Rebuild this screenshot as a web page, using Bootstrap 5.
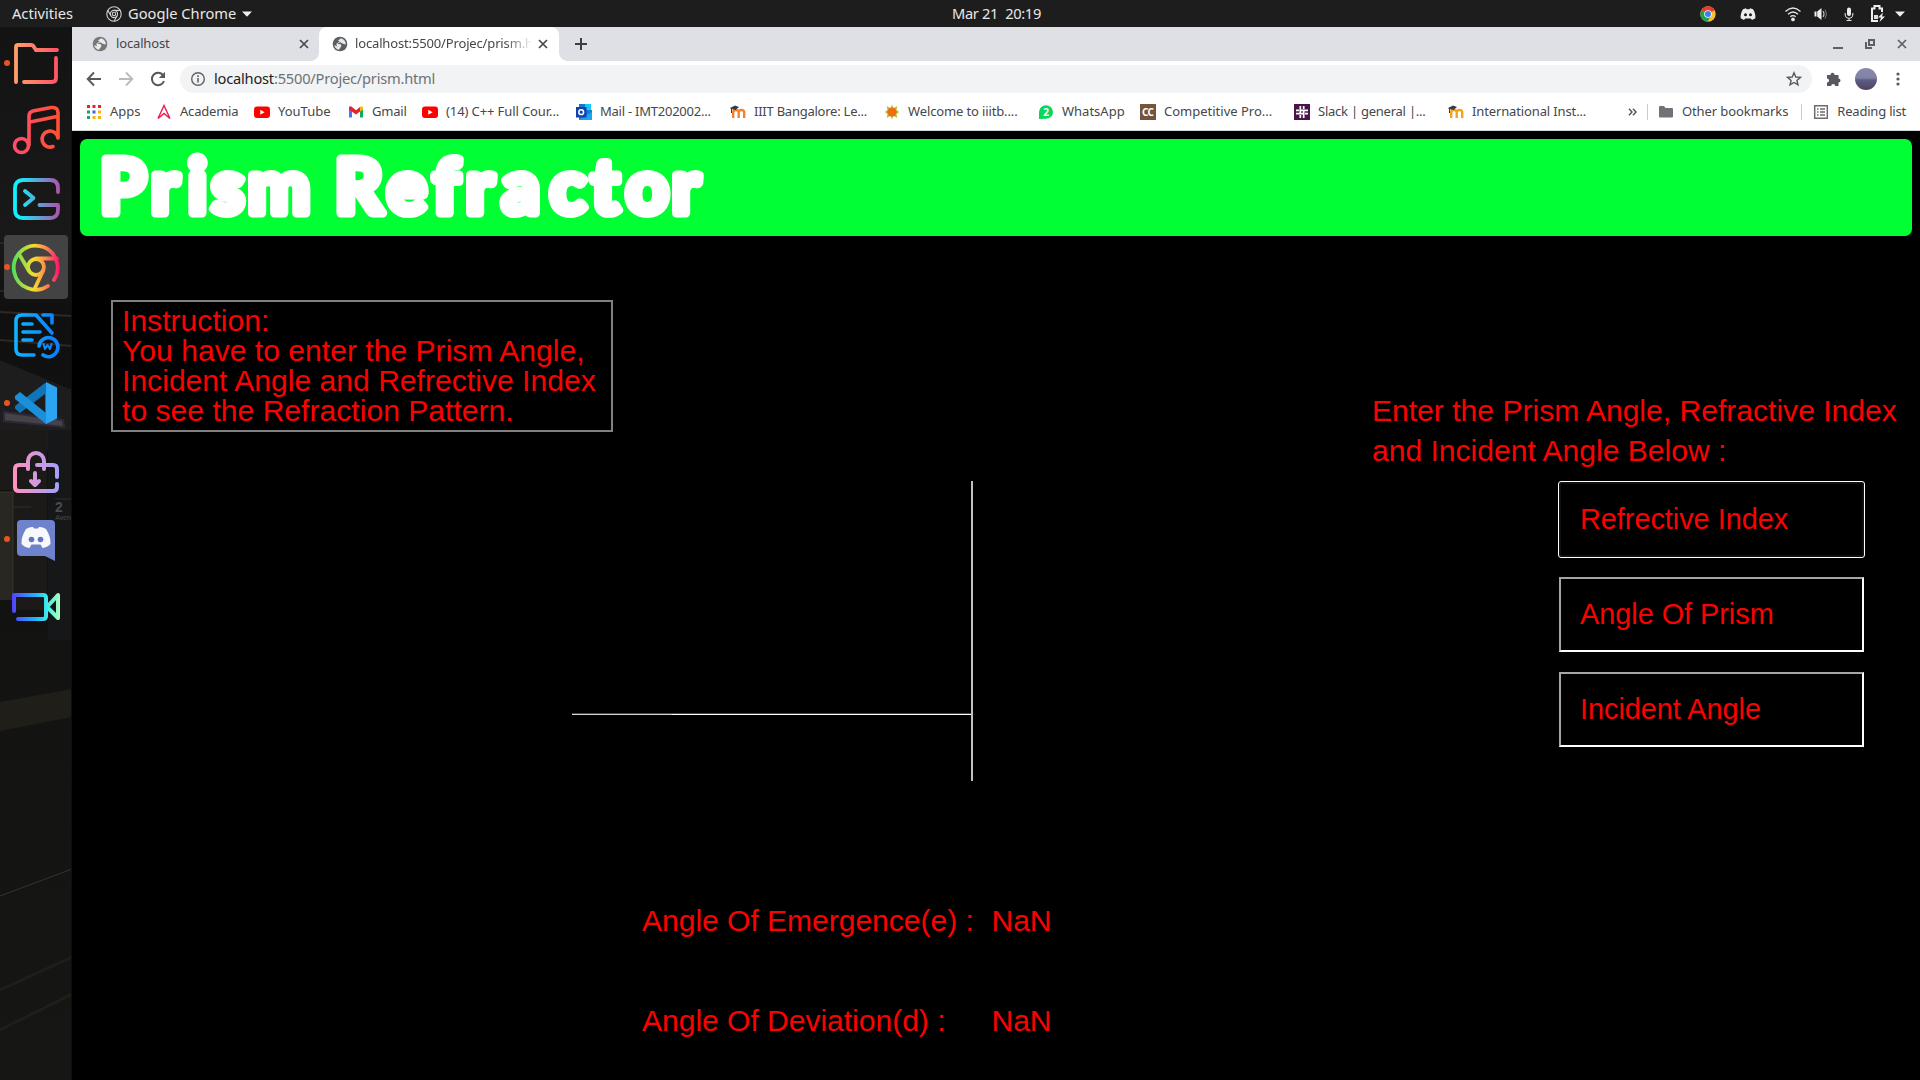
<!DOCTYPE html>
<html lang="en">
<head>
<meta charset="utf-8">
<title>Prism Refractor</title>
<link href="https://cdn.jsdelivr.net/npm/bootstrap@5.3.0/dist/css/bootstrap.min.css" rel="stylesheet">
<style>
body{width:1920px;height:1080px;overflow:hidden;background:#000;font-family:"Noto Sans",sans-serif;line-height:1.2}
svg{display:block;flex:none}
.sysbar{height:27px;background:#1d1d1d;color:#e8e8e6;font-size:14.67px;padding:0 15px 0 12px}
.sysbar .clock{left:952px;top:5px;white-space:pre;letter-spacing:-.33px}
.launcher{width:72px;height:1053px;background:#141414;padding:4px 4px 0}
.launcher .wall{left:0;top:0}
.slot{width:64px;height:64px;border-radius:4px}
.slot.current{background:#434343}
.slot.running::before{content:"";position:absolute;left:0;top:29px;width:6px;height:6px;border-radius:50%;background:#e95420}
.tabstrip{height:34px;background:#dee0e5;color:#45474a;font-size:13px;letter-spacing:-.15px}
.tab-idle{width:247px;padding:0 10px 0 20px}
.tab-open{width:240px;background:#fff;border-radius:8px 8px 0 0;padding:0 11px 0 13px}
.tab-open::before,.tab-open::after{content:"";position:absolute;bottom:0;width:8px;height:8px}
.tab-open::before{left:-8px;background:radial-gradient(circle at 0 0,transparent 7.5px,#fff 8px)}
.tab-open::after{right:-8px;background:radial-gradient(circle at 100% 0,transparent 7.5px,#fff 8px)}
.tab-open .ttl{width:176px;-webkit-mask-image:linear-gradient(90deg,#000 150px,transparent 178px)}
.toolbar{height:36px;background:#fff;padding:0 14px 0 14px}
.omni{width:1632px;height:28px;border-radius:14px;background:#f1f3f4;font-size:14.67px;color:#6e7175;padding:0 10px;letter-spacing:-.22px}
.omni b{font-weight:400;color:#202124}
.bmarks{height:34px;background:#fff;border-bottom:1px solid #d5d7db;font-size:13px;color:#45474a;padding:0 0 3px 14px}
.bmarks .it{gap:8px;margin-right:16px}
.bmarks .long{width:114px;letter-spacing:-.24px}
.bmarks .mid{width:58px;letter-spacing:-.2px}
.bmarks .sep{width:1px;height:16px;background:#c9cbce}
.page{font-family:"Liberation Sans",sans-serif;font-size:30px;color:#f00;height:949px;background:#000;padding:8px 8px 0}
.banner{height:97px;background:#00ff33;border-radius:7px}
.banner svg{overflow:visible}
.banner text{font-family:Lato,sans-serif;font-weight:700;font-size:74px;fill:#fff;stroke:#fff;stroke-width:9px;stroke-linejoin:round}
.lcol{width:1292px}
.howto{width:502px;height:132px;margin:64px 0 0 31px;border:2px solid #808080;padding:4px 0 0 9px;line-height:30px;letter-spacing:.05px}
.rays{margin:49px 0 0 492px}
.results{margin:125px 0 0 562px}
.results .line{height:100px;line-height:30px}
.results .lbl{width:349.5px}
.rcol{padding-top:155px;line-height:40px;letter-spacing:.03px}
.rcol label{height:91px}
.field{width:305px;height:75px;margin:0 0 20px 187px;border:2px solid;border-color:#a5a5a5 #fff #fff #a5a5a5;background:#000;color:#f00;border-radius:0;padding:0 19px;font:28.8px "Liberation Sans",sans-serif}
.field::placeholder{color:#f00;opacity:1}
.field.active{border-color:#101010;outline:1px solid #fff;border-radius:2px}
</style>
</head>
<body class="m-0">
<header class="sysbar d-flex align-items-center position-relative">
  <span>Activities</span>
  <svg style="margin-left:33px" width="16" height="16" viewBox="0 0 16 16" fill="none" stroke="#cfcfcf" stroke-width="1.1"><circle cx="8" cy="8" r="7.2"/><circle cx="8" cy="8" r="3.6"/><circle cx="8" cy="8" r="1.7"/><path d="M8 4.4h6.4M4.9 9.8 1.800 4.300M11.100 9.800 8 15.200"/></svg>
  <span style="margin-left:6px">Google Chrome</span>
  <svg style="margin-left:6px" width="10" height="6" viewBox="0 0 10 6"><path d="M0 .5h10L5 5.700z" fill="#eee"/></svg>
  <span class="clock position-absolute">Mar 21  20:19</span>
  <div class="ms-auto d-flex align-items-center">
    <svg width="16" height="16" viewBox="0 0 16 16"><circle cx="8" cy="8" r="7.7" fill="#fbc02d"/><path d="M8 8 1.300 4.200A7.700 7.700 0 0 1 14.700 4.200z" fill="#e33b2e"/><path d="M8 8 1.300 4.200A7.700 7.700 0 0 0 7.600 15.700L11 9.600z" fill="#1fa055"/><circle cx="8" cy="8" r="3.800" fill="#fff"/><circle cx="8" cy="8" r="3" fill="#3f7ee8"/></svg>
    <svg style="margin-left:24px" width="16" height="16" viewBox="0 0 16 16"><path d="M3 3.200 6 2.300l.6.9h2.800l.6-.9 3 .9c1.800 2.600 2.600 5.500 2.400 9L12 14l-1.200-1.400H5.200L4 14 .6 12.200C.5 8.700 1.200 5.800 3 3.200z" fill="#eee"/><circle cx="5.500" cy="8.700" r="1.500" fill="#1d1d1d"/><circle cx="10.500" cy="8.700" r="1.500" fill="#1d1d1d"/></svg>
    <svg style="margin-left:29px" width="16" height="16" viewBox="0 0 16 16" fill="none" stroke="#e6e6e6" stroke-width="1.300"><path d="M.5 5.500q7.500-7 15 0M3 8.300q5-4.600 10 0M5.300 10.800q2.700-2.400 5.400 0"/><circle cx="8" cy="13.400" r="1.200" fill="#eee"/></svg>
    <svg style="margin-left:12px" width="16" height="16" viewBox="0 0 16 16"><path d="M1.500 5.500h2V10.500h-2zM4.200 5.500 8.500 2v12L4.200 10.500z" fill="#eee"/><path d="M10 5q2 3 0 6" fill="none" stroke="#bbb" stroke-width="1.200"/><path d="M12 3.500q3 4.500 0 9" fill="none" stroke="#777"/></svg>
    <svg style="margin-left:12px" width="16" height="16" viewBox="0 0 16 16"><rect x="6" y="1.500" width="4" height="8.500" rx="2" fill="#eee"/><path d="M4.200 7v1.500a3.800 3.800 0 0 0 7.600 0V7M8 12v2.500M5.500 14.500h5" fill="none" stroke="#ddd" stroke-width="1.100"/></svg>
    <svg style="margin-left:13px" width="16" height="17" viewBox="0 0 16 17"><path d="M8 16H2V3.500h2.500V1h5v2.500H12V7" fill="none" stroke="#eee" stroke-width="2"/><path d="M4 10h4v4H4z" fill="#ddd"/><path d="M13 7.500 8 12.500h3L9.500 17l5.500-5.500h-3z" fill="#eee"/></svg>
    <svg style="margin-left:9px" width="10" height="6" viewBox="0 0 10 6"><path d="M0 .5h10L5 5.700z" fill="#eee"/></svg>
  </div>
</header>
<div class="d-flex">
<aside class="launcher position-relative d-flex flex-column gap-1">
  <svg class="wall position-absolute" width="72" height="1053" viewBox="0 27 72 1053">
    <defs><linearGradient id="bgd" x1="0" y1="0" x2="0" y2="1"><stop offset="0" stop-color="#131313"/><stop offset=".2" stop-color="#191919"/><stop offset=".27" stop-color="#101010"/><stop offset="1" stop-color="#161614"/></linearGradient></defs>
    <path d="M0 27h72v1053H0z" fill="url(#bgd)"/>
    <path d="M0 312 72 316M0 340 72 346" stroke="#2e2a22" stroke-width="2"/>
    <path d="M0 243h30M0 291h32" stroke="#3a3624"/>
    <path d="M0 360 72 390V450H0z" fill="#1d1d1d"/>
    <path d="M4 412 63 420 64 427 4 421z" fill="#454248" stroke="#2f2838" stroke-width="2"/>
    <path d="M0 430h47v180H12V490H0z" fill="#1b1a19"/><path d="M48 430h24v210H48z" fill="#151718"/>
    <path d="M0 492h13v108H0z" fill="#292721"/><path d="M0 492h13v108" fill="none" stroke="#38342a"/>
    <path d="M55 499h17M14 507h17" stroke="#2c2e2e"/>
    <text x="55" y="512" font-family="Liberation Sans" font-size="14" font-weight="700" fill="#4b4b4a">2</text>
    <text x="55" y="520" font-family="Liberation Sans" font-size="7" font-weight="700" fill="#3c3c3c" textLength="16">Aven</text>
    <path d="M0 702 72 689V717L0 731z" fill="#201e19"/><path d="M0 896 72 869" stroke="#33342f"/>
    <path d="M0 990 72 957M0 1030 72 994" stroke="#1e1e1a" stroke-width="3"/>
    <path d="M71.500 27v1053" stroke="#0e0e0e"/>
  </svg>
  <div class="slot running position-relative"><svg width="64" height="64" viewBox="4 31 64 64" fill="none"><defs><linearGradient id="g1"><stop stop-color="#ff9d6b"/><stop offset="1" stop-color="#ff5566"/></linearGradient></defs><path d="M16 82V47q0-2 2-2H31q2 0 3 2l2 3H57M56 58V78q0 4-4 4H24" stroke="url(#g1)" stroke-width="3.800" stroke-linecap="round"/></svg></div>
  <div class="slot position-relative"><svg width="64" height="64" viewBox="4 99 64 64" fill="none" stroke="url(#g2)" stroke-width="3.600" stroke-linecap="round"><defs><linearGradient id="g2" x1="14" x2="60" y1="0" y2="0" gradientUnits="userSpaceOnUse"><stop stop-color="#ff4d6d"/><stop offset="1" stop-color="#ff5130"/></linearGradient></defs><circle cx="21.500" cy="145.500" r="7"/><path d="M29 145V116q0-4 4-5l18-3.500q7-.5 7 5V138M30 122l27-5.500M58 138a8 8 0 1 0-5 8.500"/></svg></div>
  <div class="slot position-relative"><svg width="64" height="64" viewBox="4 167 64 64" fill="none" stroke="url(#g3)" stroke-width="3.800" stroke-linecap="round" stroke-linejoin="round"><defs><linearGradient id="g3" x1="14" x2="60" y1="0" y2="0" gradientUnits="userSpaceOnUse"><stop offset=".1" stop-color="#10f0ff"/><stop offset="1" stop-color="#b050a8"/></linearGradient></defs><path d="M58 192V188q0-8-8-8H23q-8 0-8 8V210q0 8 8 8H50q8 0 8-8V205H39.500"/><path d="M25 191 33.500 198 25 205"/></svg></div>
  <div class="slot running current position-relative"><svg width="64" height="64" viewBox="4 235 64 64" fill="none" stroke="url(#g4)" stroke-width="3.800" stroke-linecap="round"><defs><linearGradient id="g4" x1="12" x2="60" y1="0" y2="0" gradientUnits="userSpaceOnUse"><stop stop-color="#4dde5a"/><stop offset=".45" stop-color="#f4dc2c"/><stop offset=".7" stop-color="#ff8a4a"/><stop offset="1" stop-color="#ff0a70"/></linearGradient></defs><path d="M54 280A22 22 0 1 0 48 286"/><circle cx="36" cy="267" r="8"/><path d="M36 258.500H57M29 271 19 254M43 271 35 288"/></svg></div>
  <div class="slot position-relative"><svg width="64" height="64" viewBox="4 303 64 64" fill="none" stroke="url(#g5)" stroke-width="3.600" stroke-linecap="round" stroke-linejoin="round"><defs><linearGradient id="g5" x1="14" x2="60" y1="0" y2="0" gradientUnits="userSpaceOnUse"><stop stop-color="#10b5ff"/><stop offset="1" stop-color="#0a7cff"/></linearGradient></defs><path d="M34 355H22q-6 0-6-6V321q0-6 6-6H36L52 333M43 315h9V323M23 324h9M23 332h17M23 340h9M39 346a9.500 9.500 0 1 1 4 9"/><path d="M43.500 344l1.500 5 2.500-4 2.500 4 1.500-5" stroke-width="2"/></svg></div>
  <div class="slot running position-relative"><svg width="64" height="64" viewBox="4 371 64 64"><path d="M45 383 57 388V418L45 424V394L20 413 15 408.500V406z" fill="#1074b8"/><path d="M15 396 20 392 46 413V424L15 399z" fill="#1b8fda"/><path d="M46 382 57 387.500V418.500L46 424z" fill="#2ba4f2"/></svg></div>
  <div class="slot position-relative"><svg width="64" height="64" viewBox="4 439 64 64" fill="none" stroke="url(#g7)" stroke-width="4" stroke-linecap="round" stroke-linejoin="round"><defs><linearGradient id="g7" x1="14" x2="60" y1="0" y2="0" gradientUnits="userSpaceOnUse"><stop stop-color="#ff92bd"/><stop offset="1" stop-color="#a2a0ff"/></linearGradient></defs><path d="M28 469V461a8 8 0 0 1 16 0V469M28 465H19q-4 0-4 4V487q0 4 4 4H53q4 0 4-4V484M37 465H53q4 0 4 4V477M35 473V484M31 481l4 4 4-4"/></svg></div>
  <div class="slot running position-relative"><svg width="64" height="64" viewBox="4 507 64 64"><path d="M21 520H51q4 0 4 4V561L45 556H21q-4 0-4-4V524q0-4 4-4z" fill="#6f83cc"/><path d="M26 529q4-2.500 7-2l1 1.500h4l1-1.500q3-.5 7 2 5 8 4.500 15-3 3.500-8 4l-2-3.500h-9l-2 3.500q-5-.5-8-4-.5-7 4.500-15z" fill="#f7f8fb"/><circle cx="31.500" cy="539.500" r="2.800" fill="#6074bf"/><circle cx="40.500" cy="539.500" r="2.800" fill="#6074bf"/></svg></div>
  <div class="slot position-relative"><svg width="64" height="64" viewBox="4 575 64 64" fill="none" stroke="url(#g9)" stroke-width="4" stroke-linecap="round" stroke-linejoin="round"><defs><linearGradient id="g9" x1="12" x2="60" y1="0" y2="0" gradientUnits="userSpaceOnUse"><stop stop-color="#5540ff"/><stop offset=".5" stop-color="#22b4ff"/><stop offset=".75" stop-color="#45eee8"/><stop offset="1" stop-color="#b0ffba"/></linearGradient></defs><path d="M14 611V595H43q3 0 3 3V616q0 3-3 3H18M58 595 47 607 58 618z"/></svg></div>
  <svg style="margin:385px 0 0 14px" width="36" height="36" viewBox="0 0 36 36" fill="#f0f0ee"><path d="M0 0h6v6H0zM15 0h6v6h-6zM30 0h6v6h-6zM0 15h6v6H0zM15 15h6v6h-6zM30 15h6v6h-6zM0 30h6v6H0zM15 30h6v6h-6zM30 30h6v6h-6z"/></svg>
</aside>
<div class="flex-grow-1">
  <svg width="0" height="0" class="position-absolute"><symbol id="globe" viewBox="0 0 16 16"><circle cx="8" cy="8" r="7.300" fill="currentColor"/><path d="M9 2.200 6 4.500l1.500 1L4 8h4.500l1 2L7 13.800Q3 13 2.200 9l3 1.500L4.200 8.500 8 6.200 11.500 8l2.300.5Q14 4 9 2.200z" fill="#fff" fill-opacity=".85"/></symbol>
  <symbol id="cross" viewBox="0 0 10 10"><path d="M1 1l8 8M9 1 1 9" stroke="currentColor" stroke-width="1.700"/></symbol>
  <symbol id="yt" viewBox="0 0 16 16"><rect x="0" y="2.500" width="16" height="11.500" rx="3" fill="#f00"/><path d="M6.300 5.700v5L10.600 8.200z" fill="#fff"/></symbol>
  <symbol id="moodle" viewBox="0 0 16 16"><path d="M3.200 14V8.500q0-2.500 2.700-2.500t2.800 2.500V14M8.700 8.500Q8.700 6 11.400 6t2.800 2.500V14" fill="none" stroke="currentColor" stroke-width="2.400"/><path d="M0 4 5 1.500 9 3 5.500 6 2 5.200V9H1V5z" fill="#3b3b3b"/></symbol></svg>
  <div class="tabstrip d-flex align-items-center">
    <div class="tab-idle d-flex align-items-center"><svg width="16" height="16" color="#777"><use href="#globe"/></svg><span style="margin-left:8px">localhost</span><svg class="ms-auto" width="10" height="10"><use href="#cross"/></svg></div>
    <div class="tab-open h-100 d-flex align-items-center position-relative"><svg width="16" height="16" color="#5a5d61"><use href="#globe"/></svg><span class="ttl overflow-hidden text-nowrap" style="margin-left:7px">localhost:5500/Projec/prism.html</span><svg class="ms-auto" width="10" height="10"><use href="#cross"/></svg></div>
    <svg style="margin-left:16px" width="12" height="12" viewBox="0 0 12 12"><path d="M6 0v12M0 6h12" stroke="#3c3e41" stroke-width="2"/></svg>
    <div class="ms-auto d-flex align-items-center" style="gap:22px;padding-right:13px;color:#5c5f63">
      <svg width="10" height="10"><path d="M0 8h10v2H0z" fill="currentColor"/></svg>
      <svg width="10" height="10" fill="none" stroke="currentColor" stroke-width="2"><path d="M4 1h5v5H4zM1 3v6h6"/></svg>
      <svg width="10" height="10"><use href="#cross"/></svg>
    </div>
  </div>
  <div class="toolbar d-flex align-items-center">
    <svg width="16" height="16" viewBox="0 0 16 16" fill="none" stroke="#56595d" stroke-width="1.900"><path d="M15 8H2.500M8 1.500 1.700 8 8 14.500"/></svg>
    <svg style="margin-left:16px" width="16" height="16" viewBox="0 0 16 16" fill="none" stroke="#b9bbbe" stroke-width="1.900"><path d="M1 8h12.500M8 1.500 14.300 8 8 14.500"/></svg>
    <svg style="margin-left:16px" width="16" height="16" viewBox="0 0 16 16"><path d="M13.200 4.400A6.200 6.200 0 1 0 14 10" fill="none" stroke="#56595d" stroke-width="2"/><path d="M15 .8V7H8.800z" fill="#56595d"/></svg>
    <div class="omni d-flex align-items-center" style="margin-left:14px">
      <svg width="16" height="16" viewBox="0 0 16 16"><circle cx="8" cy="8" r="6.300" fill="none" stroke="#5f6368" stroke-width="1.400"/><path d="M7.200 7h1.600v4.500H7.200zM7.200 4.300h1.600v1.600H7.200z" fill="#5f6368"/></svg>
      <span style="margin-left:8px"><b>localhost</b>:5500/Projec/prism.html</span>
      <svg class="ms-auto" width="16" height="16" viewBox="0 0 16 16"><path d="M8 1.800 9.800 6l4.600.4-3.500 3 1.100 4.500L8 11.500l-4 2.400 1.100-4.500-3.500-3L6.200 6z" fill="none" stroke="#56595d" stroke-width="1.400"/></svg>
    </div>
    <svg style="margin-left:14px" width="16" height="16" viewBox="0 0 16 16"><path d="M1 4h3.500a2 2 0 1 1 4-.4V4H12.500V7.500a2 2 0 1 1 0 4V15H9.200a2 2 0 0 0-4 0H1V11.500a2 2 0 0 0 0-4z" fill="#56595d"/></svg>
    <svg style="margin-left:13px" width="22" height="22" viewBox="0 0 22 22"><defs><linearGradient id="av" x1="0" x2="0" y1="0" y2="1"><stop stop-color="#8889ae"/><stop offset=".45" stop-color="#8382a4"/><stop offset=".55" stop-color="#5c5d86"/><stop offset="1" stop-color="#4a4361"/></linearGradient></defs><circle cx="11" cy="11" r="11" fill="url(#av)"/><path d="M2 15h14M7 18h10" stroke="#60506a"/></svg>
    <svg class="ms-auto" width="16" height="16" viewBox="0 0 16 16" fill="#56595d"><circle cx="8" cy="3" r="1.600"/><circle cx="8" cy="8" r="1.600"/><circle cx="8" cy="13" r="1.600"/></svg>
  </div>
  <nav class="bmarks d-flex align-items-center text-nowrap">
    <div class="it d-flex align-items-center"><svg width="16" height="16" viewBox="0 0 16 16"><path d="M1 1h3v3H1zM6.500 1h3v3h-3zM12 1h3v3h-3z" fill="#ee1c3c"/><path d="M1 6.500h3v3H1zM1 12h3v3H1z" fill="#12a85c"/><path d="M6.500 6.500h3v3h-3z" fill="#3b62e8"/><path d="M12 6.500h3v3h-3zM6.500 12h3v3h-3zM12 12h3v3h-3z" fill="#f5b50a"/></svg><span style="width:30px">Apps</span></div>
    <div class="it d-flex align-items-center"><svg width="16" height="16" viewBox="0 0 16 16"><path d="M2 14.500 8 1.500l6 13L8 9.500z" fill="none" stroke="#f0194f" stroke-width="1.400"/></svg><span class="mid">Academia</span></div>
    <div class="it d-flex align-items-center"><svg width="16" height="16"><use href="#yt"/></svg><span style="width:54px">YouTube</span></div>
    <div class="it d-flex align-items-center"><svg width="16" height="16" viewBox="0 0 16 16"><path d="M1 4v9.500h3V7z" fill="#4677f5"/><path d="M15 4v9.500h-3V7z" fill="#0fae55"/><path d="M1 3q1.500-1.500 3 0l4 3.200L12 3v4.500L8 10.500 1 5.500z" fill="#e8222c"/><path d="M12 3q1.500-1.500 3 0v2.500l-3 2z" fill="#fbbc04"/></svg><span style="width:34px;letter-spacing:-.2px">Gmail</span></div>
    <div class="it d-flex align-items-center"><svg width="16" height="16"><use href="#yt"/></svg><span class="long" style="letter-spacing:-.1px">(14) C++ Full Cour...</span></div>
    <div class="it d-flex align-items-center"><svg width="16" height="16" viewBox="0 0 16 16"><path d="M3 0h12v6H3z" fill="#18c8f5"/><path d="M3 0h6v5H3z" fill="#1278c8"/><path d="M3 6h13v10H3z" fill="#1080d8"/><path d="M3 16 16 8v8z" fill="#1ea4ee"/><path d="M0 3h10.500v10.500H0z" fill="#1340ae"/><circle cx="5.200" cy="8.200" r="2.400" fill="none" stroke="#fff" stroke-width="1.500"/></svg><span class="long">Mail - IMT202002...</span></div>
    <div class="it d-flex align-items-center"><svg width="16" height="16" color="#f5822a"><use href="#moodle"/></svg><span class="long">IIIT Bangalore: Le...</span></div>
    <div class="it d-flex align-items-center"><svg width="16" height="16" viewBox="0 0 16 16"><path d="M8 .5 9.500 4l4-2-1 4 3 2-3 2 1 4-4-2L8 15.500 6.500 12l-4 2 1-4-3-2 3-2-1-4 4 2z" fill="#b9c43c"/><circle cx="8" cy="8" r="4.600" fill="#f26a12"/></svg><span class="long" style="letter-spacing:-.13px">Welcome to iiitb....</span></div>
    <div class="it d-flex align-items-center"><svg width="16" height="16" viewBox="0 0 16 16"><path d="M1 15V8a7 6.800 0 1 1 7 6.800z" fill="#0bd65c"/><text x="8" y="11.500" text-anchor="middle" font-size="10" font-weight="700" fill="#fff">2</text></svg><span style="width:62px">WhatsApp</span></div>
    <div class="it d-flex align-items-center"><svg width="16" height="16" viewBox="0 0 16 16"><path d="M0 0h16v16H0z" fill="#76543c"/><text x="8" y="11.500" text-anchor="middle" font-size="10" font-weight="700" fill="#fff" textLength="12">CC</text></svg><span class="long" style="letter-spacing:0">Competitive Pro...</span></div>
    <div class="it d-flex align-items-center"><svg width="16" height="16" viewBox="0 0 16 16"><path d="M0 0h16v16H0z" fill="#4b134c"/><path d="M6.300 2v7M9.700 7v7M2 9.700h7M7 6.300h7M9.700 2v3M6.300 11v3M2 6.300h3M11 9.700h3" stroke="#fff" stroke-width="1.700"/></svg><span class="long">Slack | general |...</span></div>
    <div class="it d-flex align-items-center"><svg width="16" height="16" color="#f5a31a"><use href="#moodle"/></svg><span class="long" style="letter-spacing:-.13px">International Inst...</span></div>
    <div class="ms-auto d-flex align-items-center" style="padding-right:14px">
      <svg width="9" height="8" viewBox="0 0 9 8" fill="none" stroke="#56595d" stroke-width="1.500"><path d="M1 .7 4 4 1 7.300M5 .7 8 4 5 7.300"/></svg>
      <div class="sep" style="margin:0 10px"></div>
      <svg width="16" height="16" viewBox="0 0 16 16"><path d="M1 3q0-1 1-1h4l1.500 2H14q1 0 1 1v7.500q0 1-1 1H2q-1 0-1-1z" fill="#6f7377"/></svg><span style="margin-left:8px;letter-spacing:-.08px">Other bookmarks</span>
      <div class="sep" style="margin:0 11px 0 13px"></div>
      <svg width="16" height="16" viewBox="0 0 16 16" stroke="#6a6d71" fill="none"><path d="M1.700 1.700h12.600v12.600H1.700z" stroke-width="1.500"/><path d="M4 5h1.500M7 5h5M4 8h1.500M7 8h5M4 11h1.500M7 11h5" stroke-width="1.500"/></svg><span style="margin-left:8px;letter-spacing:-.2px">Reading list</span>
    </div>
  </nav>
  <main class="page">
    <h1 class="banner m-0"><svg width="700" height="97" role="img"><text y="73.500" x="20 71 108 131.500 168 235 255 307 353 386 422 470 511.500 546 592">Prism Refractor</text></svg></h1>
    <div class="d-flex">
      <div class="lcol">
        <div class="howto">Instruction:<br>You have to enter the Prism Angle,<br>Incident Angle and Refrective Index<br>to see the Refraction Pattern.</div>
        <svg class="rays" width="402" height="300"><path d="M0 232h401v1H0z" fill="#484848"/><path d="M0 233h100v1H0z" fill="#d4d4d4"/><path d="M100 233h301v1H100z" fill="#fff"/><path d="M399 0h2v300h-2z" fill="#c3c0bd"/></svg>
        <div class="results">
          <div class="line d-flex"><span class="lbl">Angle Of Emergence(e) :</span><span>NaN</span></div>
          <div class="line d-flex"><span class="lbl">Angle Of Deviation(d) :</span><span>NaN</span></div>
        </div>
      </div>
      <form class="rcol">
        <label class="d-block">Enter the Prism Angle, Refractive Index<br>and Incident Angle Below :</label>
        <input class="field active d-block" placeholder="Refrective Index">
        <input class="field d-block" placeholder="Angle Of Prism">
        <input class="field d-block" placeholder="Incident Angle">
      </form>
    </div>
  </main>
</div>
</div>
<script src="https://cdn.jsdelivr.net/npm/bootstrap@5.3.0/dist/js/bootstrap.bundle.min.js"></script>
</body>
</html>
